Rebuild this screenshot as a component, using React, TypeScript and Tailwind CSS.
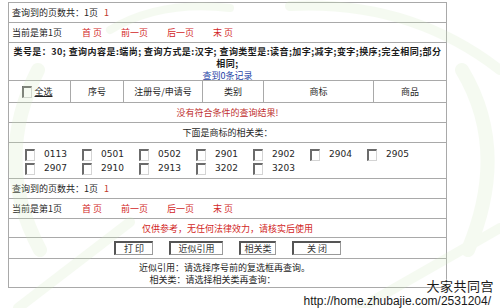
import React from 'react';

const codesRow1 = ['0113', '0501', '0502', '2901', '2902', '2904', '2905'];
const codesRow2 = ['2907', '2910', '2913', '3202', '3203'];

function Box() {
  return (
    <span className="inline-block w-[10px] h-[12px] bg-white border-l-2 border-t-2 border-r border-b border-l-[#6b6b6b] border-t-[#6b6b6b] border-r-[#d4d4d4] border-b-[#d4d4d4]" />
  );
}

function Pager() {
  return (
    <>
      <div className="h-[20px] flex items-center px-[3px] border-b border-[#a9a9a9]">
        查询到的页数共：1页 <span className="ml-[6px] text-[#c0392b]">1</span>
      </div>
      <div className="h-[20px] flex items-center gap-[19px] px-[3px] border-b border-[#a9a9a9]">
        <span>当前是第1页</span>
        <span className="ml-[1px] text-[#d21f1f]">首 页</span>
        <span className="text-[#d21f1f]">前一页</span>
        <span className="text-[#d21f1f]">后一页</span>
        <span className="text-[#d21f1f]">末 页</span>
      </div>
    </>
  );
}

export default function App() {
  const cols = [
    { w: 'w-[61px]', label: '' },
    { w: 'w-[53px]', label: '序号' },
    { w: 'w-[79px]', label: '注册号/申请号' },
    { w: 'w-[61px]', label: '类别' },
    { w: 'w-[110px]', label: '商标' },
    { w: 'flex-1', label: '商品' },
  ];

  return (
    <div className="relative w-[500px] h-[308px] overflow-hidden bg-white text-[9px] leading-none text-[#262626] font-['Noto_Sans_CJK_SC',sans-serif]">
      <div className="pt-[2px] pl-[8px]">
        <div className="w-[439px] border-t border-x border-[#a9a9a9]">
          <Pager />

          {/* query summary */}
          <div className="h-[38px] flex flex-col items-center pt-[3px] border-b border-[#a9a9a9]">
            <div className="font-bold text-[#1c1c1c] tracking-[0.45px] text-center leading-[12px]">
              类号是：30; 查询内容是:端尚; 查询方式是:汉字; 查询类型是:读音;加字;减字;变字;换序;完全相同;部分
              <br />
              相同;
            </div>
            <div className="mt-[1px] leading-[10px] text-[#1d3fa6]">查到0条记录</div>
          </div>

          {/* header */}
          <div className="h-[22px] flex border-b border-[#a9a9a9]">
            {cols.map((c, i) => (
              <div
                key={i}
                className={`${c.w} flex items-center justify-center ${i > 0 ? 'border-l border-[#a9a9a9]' : ''}`}
              >
                {i === 0 ? (
                  <span className="flex items-center gap-[2px] -ml-[4px]">
                    <Box />
                    <span className="underline">全选</span>
                  </span>
                ) : (
                  c.label
                )}
              </div>
            ))}
          </div>

          <div className="h-[20px] flex items-center justify-center border-b border-[#a9a9a9] text-[#c0302f]">
            没有符合条件的查询结果!
          </div>
          <div className="h-[20px] flex items-center justify-center border-b border-[#a9a9a9]">
            下面是商标的相关类：
          </div>

          {/* related classes */}
          <div className="h-[36px] flex flex-col justify-center gap-[2px] pt-[2px] pl-[16px] border-b border-[#a9a9a9] font-['DejaVu_Sans',sans-serif]">
            {[codesRow1, codesRow2].map((row, r) => (
              <div key={r} className="flex">
                {row.map((code) => (
                  <div key={code} className="w-[57px] flex items-center gap-[9px]">
                    <Box />
                    <span className="text-[9px]">{code}</span>
                  </div>
                ))}
              </div>
            ))}
          </div>

          <Pager />

          <div className="h-[19px] flex items-center justify-center border-b border-[#a9a9a9] text-[#d21f1f]">
            仅供参考，无任何法律效力，请核实后使用
          </div>

          {/* buttons */}
          <div className="h-[21px] flex items-center justify-center gap-[16px] border-b border-[#a9a9a9]">
            {[
              { t: '打 印', w: 'w-[39px]' },
              { t: '近似引用', w: 'w-[54px]' },
              { t: '相关类', w: 'w-[37px]' },
              { t: '关 闭', w: 'w-[49px]' },
            ].map((b) => (
              <button
                key={b.t}
                className={`${b.w} h-[14px] flex items-center justify-center bg-white text-[9px] text-[#333] border-l-2 border-t-2 border-r border-b border-l-[#555] border-t-[#555] border-r-[#9a9a9a] border-b-[#9a9a9a]`}
              >
                {b.t}
              </button>
            ))}
          </div>

          <div className="h-[29px] flex flex-col items-center justify-center gap-[3px] border-b border-[#a9a9a9]">
            <div className="mr-[6px]">近似引用：请选择序号前的复选框再查询。</div>
            <div className="mr-[30px]">相关类：请选择相关类再查询：</div>
          </div>
        </div>
      </div>

      {/* faint background watermark */}
      <svg
        className="pointer-events-none absolute inset-0"
        width="500"
        height="308"
        viewBox="0 0 500 308"
        fill="none"
      >
        <g stroke="#cfe9bb" strokeLinecap="round" opacity="0.2">
          <path d="M38 70 Q-8 160 40 250" strokeWidth="14" />
          <path d="M462 70 Q510 150 468 250" strokeWidth="14" />
          <path d="M18 308 L130 222" strokeWidth="10" />
          <path d="M360 308 L500 228" strokeWidth="10" />
          <path d="M290 6 Q410 0 500 70" strokeWidth="10" />
          <path d="M110 30 Q160 0 230 8" strokeWidth="8" />
        </g>
      </svg>

      {/* site watermark */}
      <div className="pointer-events-none absolute right-[6px] bottom-0 flex flex-col items-end text-[#1a1a1a] [text-shadow:0_0_2px_#fff,0_0_2px_#fff]">
        <span className="text-[13px] leading-[17px] tracking-[0.5px] font-['Noto_Sans_CJK_SC',sans-serif]">大家共同宫</span>
        <span className="mr-[3px] text-[12px] leading-[14px] font-['Liberation_Sans',sans-serif]">http://home.zhubajie.com/2531204/</span>
      </div>
    </div>
  );
}
